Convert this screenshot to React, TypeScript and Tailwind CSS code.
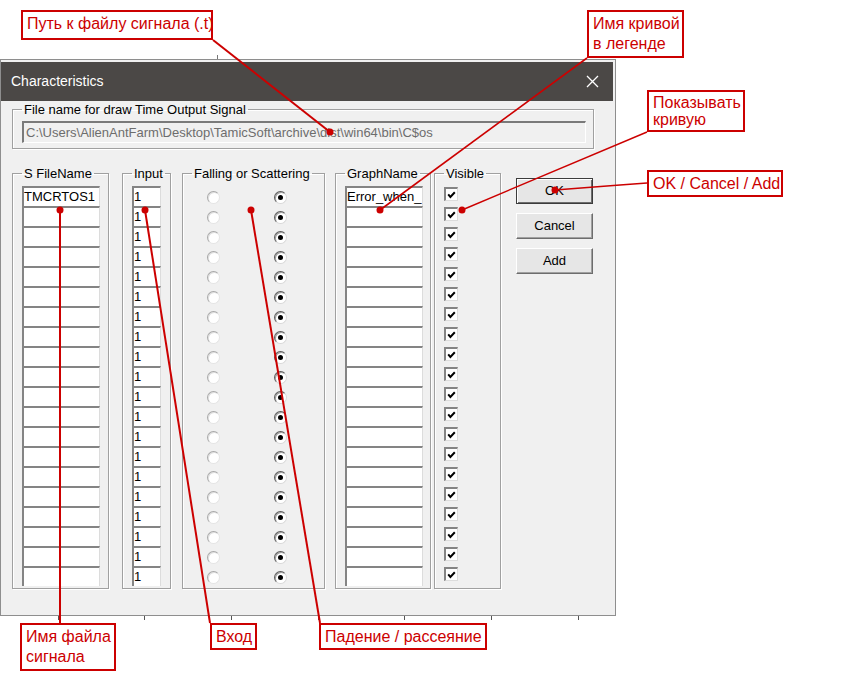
import clsx from 'clsx'
import { ReactNode } from 'react'

const rows = Array.from({ length: 20 }, (_, i) => i)
const red = '#cc0000'

function Group({ label, className, bodyClass, children }: { label: string, className?: string, bodyClass?: string, children: ReactNode }) {
    return (
        <fieldset className={clsx('border border-[#a0a0a0] shadow-[inset_1px_1px_0_#fff,1px_1px_0_#fff]', className)}>
            <legend className="ml-[9px] px-[2px] text-[13px] leading-[15px] text-black whitespace-nowrap">{label}</legend>
            <div className={bodyClass}>{children}</div>
        </fieldset>
    )
}

function Cell({ text, width }: { text?: string, width: string }) {
    return (
        <div className={clsx('h-[20px] border-t-2 border-l-2 border-t-[#848484] border-l-[#848484] border-r border-r-[#dcdcdc] bg-white text-[13px] leading-[18px] text-black overflow-hidden whitespace-nowrap', width)}>
            {text}
        </div>
    )
}

function Radio({ checked }: { checked?: boolean }) {
    return (
        <div
            className={clsx(
                'w-[13px] h-[13px] rounded-full bg-white flex items-center justify-center border',
                checked
                    ? 'border-t-[#5a5a5a] border-l-[#5a5a5a] border-b-[#d8d8d8] border-r-[#d8d8d8] shadow-[inset_1px_1px_0_#a0a0a0]'
                    : 'border-t-[#a8a8a8] border-l-[#a8a8a8] border-b-[#e4e4e4] border-r-[#e4e4e4] shadow-[inset_1px_1px_0_#e0e0e0]'
            )}
        >
            {checked && <div className="w-[5px] h-[5px] rounded-full bg-black" />}
        </div>
    )
}

function Check() {
    return (
        <div className="w-[14px] h-[14px] border-t-2 border-l-2 border-t-[#848484] border-l-[#848484] border-r border-b border-r-[#dcdcdc] border-b-[#dcdcdc] bg-white flex items-center justify-center">
            <svg width="9" height="8" viewBox="0 0 9 8">
                <polyline points="1.2,3.4 3.4,5.9 7.8,1.3" fill="none" stroke="#000" strokeWidth="2" />
            </svg>
        </div>
    )
}

function Button({ label, primary }: { label: string, primary?: boolean }) {
    return (
        <div
            className={clsx(
                'w-[77px] h-[26px] flex items-center justify-center text-[13px] text-black bg-[#e6e6e6]',
                primary
                    ? 'border border-[#3c3c3c] shadow-[inset_1px_1px_0_#fff,inset_-1px_-1px_0_#6d6d6d]'
                    : 'border border-t-white border-l-white border-b-[#6d6d6d] border-r-[#6d6d6d] shadow-[inset_-1px_-1px_0_#a0a0a0]'
            )}
        >
            {label}
        </div>
    )
}

function Callout({ lines, className }: { lines: string[], className: string }) {
    return (
        <div className={clsx('absolute border-2 border-[#cc0000] bg-white text-[#cc0000] text-[16px] leading-[20px] px-[4px] py-[2px] whitespace-nowrap', className)}>
            {lines.map(l => <div key={l}>{l}</div>)}
        </div>
    )
}

export default function App() {
    return (
        <div className="relative w-[846px] h-[678px] bg-white overflow-hidden" style={{ fontFamily: '"Liberation Sans", Arial, sans-serif' }}>
            {/* ticks of the background behind the window */}
            {[58, 144, 231, 318, 404, 491, 578].map(x => (
                <div key={x} className="absolute top-[616px] w-px h-[4px] bg-[#555]" style={{ left: x }} />
            ))}
            <div className="absolute top-[55px] left-[217px] w-px h-[4px] bg-[#777]" />

            {/* window */}
            <div className="absolute left-0 top-[59px] w-[616px] h-[557px] border border-[#8e8e8e] bg-[#f0f0f0] flex flex-col">
                <div className="mt-[2px] mr-[2px] h-[39px] bg-[#4b4846] flex items-center justify-between pl-[10px] pr-[14px]">
                    <span className="text-white text-[14px]">Characteristics</span>
                    <svg width="13" height="13" viewBox="0 0 13 13">
                        <path d="M1 1 L12 12 M12 1 L1 12" stroke="#fff" strokeWidth="1.3" />
                    </svg>
                </div>

                <div className="flex-1 pl-[11px] pt-[1px]">
                    <Group label="File name for draw Time Output Signal" className="w-[582px]" bodyClass="pl-[9px] pb-[5px]">
                        <div className="mt-[4px] w-[564px] h-[22px] border-t-2 border-l-2 border-t-[#7a7a7a] border-l-[#7a7a7a] border-b border-r border-b-white border-r-white text-[13px] leading-[19px] text-[#6d6d6d] pl-[2px] whitespace-nowrap overflow-hidden">
                            C:\Users\AlienAntFarm\Desktop\TamicSoft\archive\dist\win64\bin\C$os
                        </div>
                    </Group>

                    <div className="flex mt-[17px] items-start">
                        <Group label="S FileName" className="w-[97px] h-[423px]" bodyClass="pl-[9px] pt-[5px]">
                            {rows.map(i => <Cell key={i} width="w-[78px]" text={i === 0 ? 'TMCRTOS1' : ''} />)}
                        </Group>
                        <Group label="Input" className="ml-[13px] w-[49px] h-[423px]" bodyClass="pl-[9px] pt-[5px]">
                            {rows.map(i => <Cell key={i} width="w-[29px]" text="1" />)}
                        </Group>
                        <Group label="Falling or Scattering" className="ml-[11px] w-[143px] h-[423px]" bodyClass="pl-[24px] pt-[5px]">
                            {rows.map(i => (
                                <div key={i} className="h-[20px] flex items-center gap-[54px] pt-[2px]">
                                    <Radio />
                                    <Radio checked />
                                </div>
                            ))}
                        </Group>
                        <Group label="GraphName" className="ml-[10px] w-[96px] h-[423px]" bodyClass="pl-[9px] pt-[5px]">
                            {rows.map(i => <Cell key={i} width="w-[78px]" text={i === 0 ? 'Error_when_' : ''} />)}
                        </Group>
                        <Group label="Visible" className="ml-[3px] w-[67px] h-[423px]" bodyClass="pl-[9px] pt-[6px] flex flex-col gap-[6px]">
                            {rows.map(i => <Check key={i} />)}
                        </Group>
                        <div className="ml-[15px] mt-[12px] flex flex-col gap-[9px]">
                            <Button label="OK" primary />
                            <Button label="Cancel" />
                            <Button label="Add" />
                        </div>
                    </div>
                </div>
            </div>

            {/* annotation lines */}
            <svg className="absolute inset-0 pointer-events-none" width="846" height="678">
                <g stroke={red} strokeWidth="2" fill="none">
                    <line x1="213" y1="40" x2="330" y2="132" />
                    <line x1="587" y1="58" x2="380" y2="210" strokeWidth="1.6" />
                    <line x1="647" y1="132" x2="462" y2="210" strokeWidth="1.4" />
                    <polyline points="647,183 620,185 555,190" strokeWidth="1.4" />
                    <line x1="60" y1="623" x2="60" y2="210" />
                    <line x1="210" y1="623" x2="145" y2="210" />
                    <line x1="320" y1="623" x2="251" y2="210" />
                </g>
                <g fill={red}>
                    {[[330, 132], [380, 210], [462, 210], [555, 190], [60, 210], [145, 210], [251, 210]].map(([x, y]) => (
                        <circle key={`${x}-${y}`} cx={x} cy={y} r="3.5" />
                    ))}
                </g>
            </svg>

            <Callout lines={['Путь к файлу сигнала (.t)']} className="left-[21px] top-[10px] w-[192px] h-[30px]" />
            <Callout lines={['Имя кривой', 'в легенде']} className="left-[587px] top-[10px] w-[97px] h-[48px]" />
            <Callout lines={['Показывать', 'кривую']} className="left-[647px] top-[90px] w-[98px] h-[42px] !leading-[17px]" />
            <Callout lines={['OK / Cancel / Add']} className="left-[647px] top-[170px] w-[136px] h-[27px] !py-0 !leading-[23px]" />
            <Callout lines={['Имя файла', 'сигнала']} className="left-[20px] top-[623px] w-[96px] h-[48px]" />
            <Callout lines={['Вход']} className="left-[210px] top-[623px] w-[47px] h-[27px] !py-0 !leading-[23px]" />
            <Callout lines={['Падение / рассеяние']} className="left-[319px] top-[623px] w-[168px] h-[27px] !py-0 !leading-[23px]" />
        </div>
    )
}
